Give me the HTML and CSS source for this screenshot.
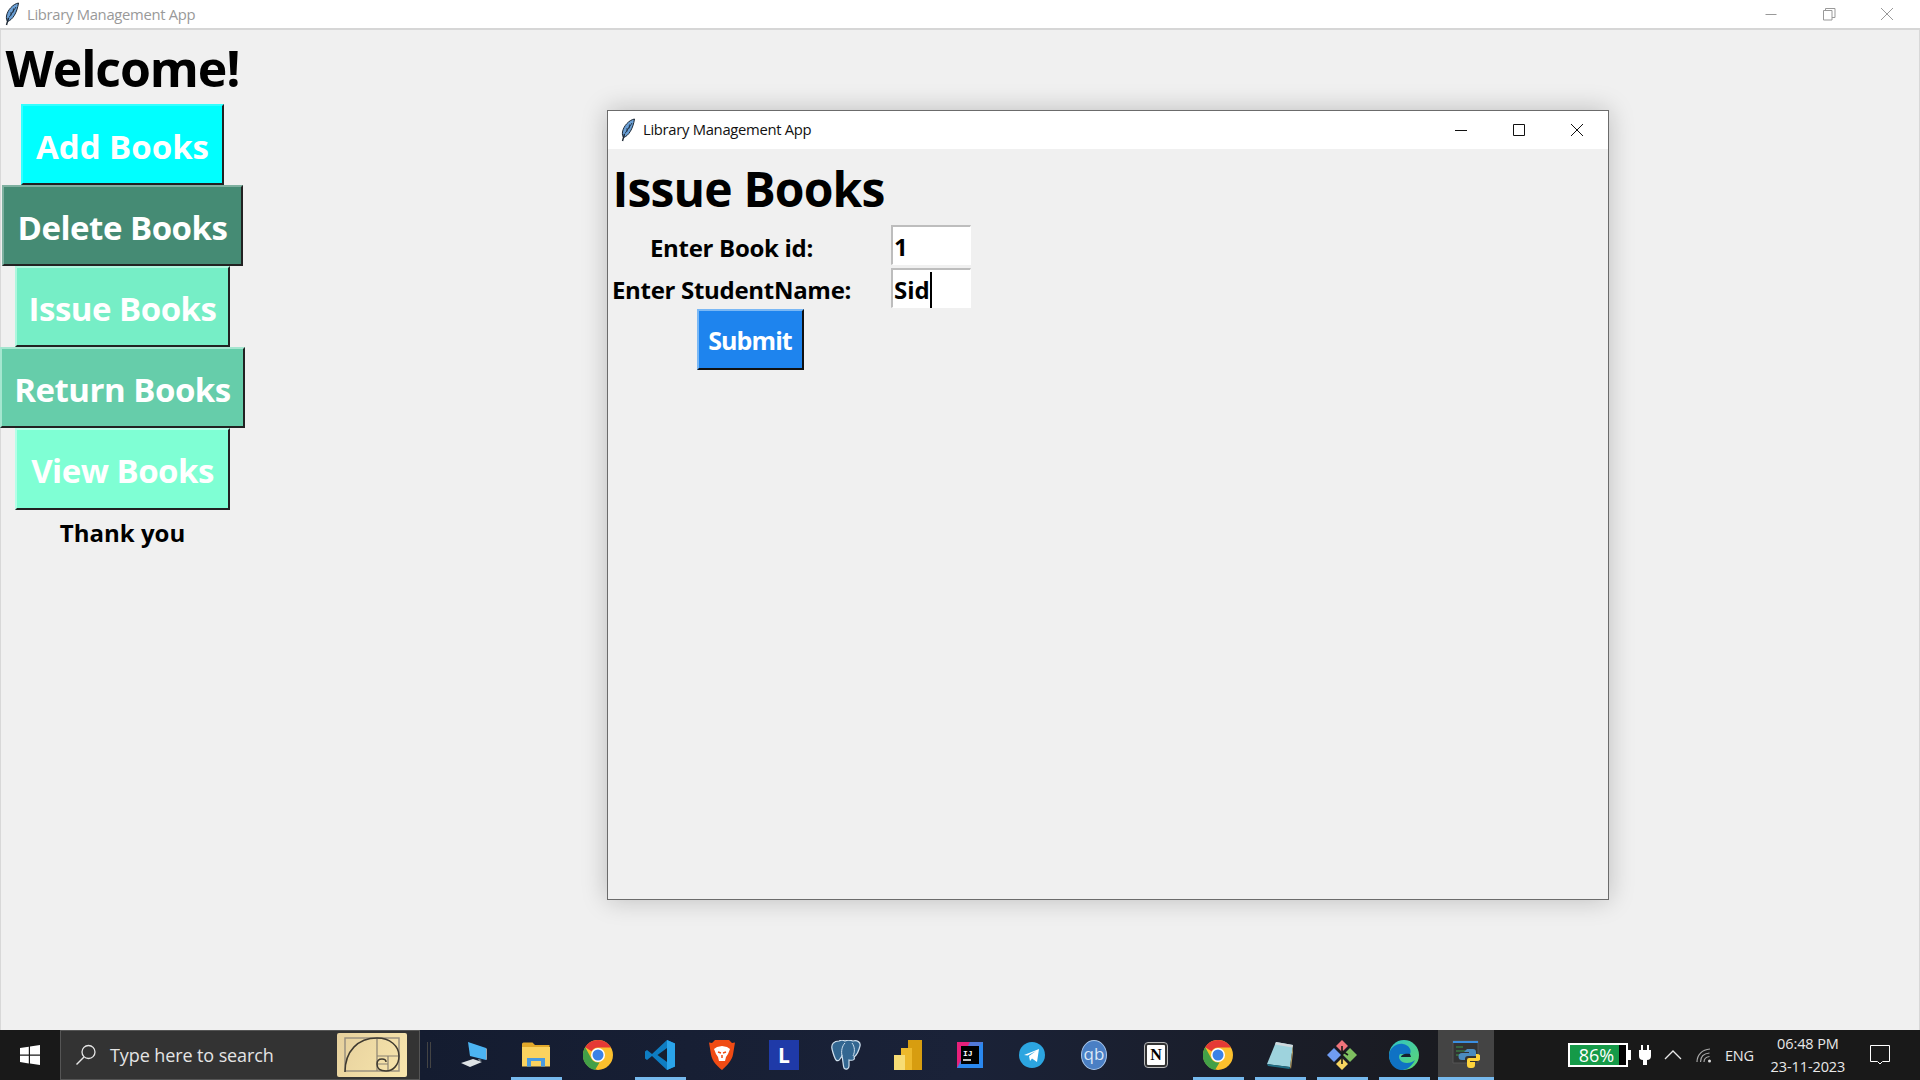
FILE: index.html
```html
<!DOCTYPE html>
<html lang="en">
<head>
<meta charset="utf-8">
<title>Library Management App</title>
<link rel="stylesheet" href="styles.css">
</head>
<body>
<svg class="defs" width="0" height="0">
  <symbol id="feather" viewBox="0 0 16 24">
    <path d="M14.5 1C9 2 3.5 8 2.5 14c-.4 2.500.2 4.500 1 5.500C8.500 18 13 11 14.500 1z" fill="#6a9fd5" stroke="#1c2733" stroke-width="1"/>
    <path d="M12 5 5 15.500M9.500 6.500l-.5 4M7 10v3.500" stroke="#14202c" stroke-width=".8" fill="none"/>
    <path d="M4.500 16 2.500 23" stroke="#1c2733" stroke-width="1.400"/>
  </symbol>
  <symbol id="chrome" viewBox="0 0 30 30">
    <circle cx="15" cy="15" r="15" fill="#fbc02d"/>
    <path d="M15 0a15 15 0 0 1 13 7.500H15A7.500 7.500 0 0 0 8.500 11.300L2.200 7.200A15 15 0 0 1 15 0z" fill="#e53935"/>
    <path d="M2.200 7.200 8.500 18.800A7.500 7.500 0 0 0 16.500 22.400L12 30A15 15 0 0 1 2.200 7.200z" fill="#43a047"/>
    <circle cx="15" cy="15" r="7" fill="#fff"/>
    <circle cx="15" cy="15" r="5.500" fill="#3b82e6"/>
  </symbol>
</svg>

<div class="screen">
  <main class="app">
    <header class="titlebar titlebar-inactive">
      <svg class="feather" width="16" height="24"><use href="#feather"/></svg>
      <span class="title-text">Library Management App</span>
      <div class="win-controls win-controls-inactive">
        <svg width="14" height="14" viewBox="0 0 14 14"><path d="M1.500 7.500h11" stroke="#999" fill="none"/></svg>
        <svg width="14" height="14" viewBox="0 0 14 14"><path d="M1.500 3.500h8.500v9.500H1.500zM3.500 3.500V1.500h9.500v9h-3" stroke="#999" fill="none"/></svg>
        <svg width="14" height="14" viewBox="0 0 14 14"><path d="M1 1l12 12M13 1 1 13" stroke="#999" fill="none"/></svg>
      </div>
    </header>
    <section class="menu">
      <h1 class="welcome">Welcome!</h1>
      <button class="btn btn-add">Add Books</button>
      <button class="btn btn-delete">Delete Books</button>
      <button class="btn btn-issue">Issue Books</button>
      <button class="btn btn-return">Return Books</button>
      <button class="btn btn-view">View Books</button>
      <p class="thanks">Thank you</p>
    </section>
  </main>

  <section class="dialog">
    <header class="titlebar titlebar-dialog">
      <svg class="feather" width="16" height="24"><use href="#feather"/></svg>
      <span class="title-text title-active">Library Management App</span>
      <div class="win-controls">
        <svg width="14" height="14" viewBox="0 0 14 14"><path d="M1 7.500h12" stroke="#111" fill="none"/></svg>
        <svg width="14" height="14" viewBox="0 0 14 14"><path d="M1.500 1.500h11v11h-11z" stroke="#111" fill="none"/></svg>
        <svg width="14" height="14" viewBox="0 0 14 14"><path d="M1 1l12 12M13 1 1 13" stroke="#111" fill="none"/></svg>
      </div>
    </header>
    <form class="issue-form">
      <h2 class="issue-title">Issue Books</h2>
      <label class="field-label">Enter Book id:</label>
      <div class="entry">1</div>
      <label class="field-label">Enter StudentName:</label>
      <div class="entry entry-focus"><span class="caret-text">Sid</span></div>
      <button type="button" class="submit">Submit</button>
    </form>
  </section>

  <footer class="taskbar">
    <div class="start">
      <svg width="20" height="20" viewBox="0 0 20 20"><path d="M0 3l8.800-1.300v7.800H0zM10 1.500 20 0v9.500H10zM0 10.700h8.800v7.700L0 17.100zM10 10.700h10V20l-10-1.500z" fill="#fff"/></svg>
    </div>
    <div class="search">
      <svg width="22" height="22" viewBox="0 0 22 22"><circle cx="13.500" cy="8" r="6.500" stroke="#e6e6e6" stroke-width="1.300" fill="none"/><path d="M9 13 1.500 20.500" stroke="#e6e6e6" stroke-width="1.500"/></svg>
      <span class="search-text">Type here to search</span>
      <div class="doodle">
        <svg width="56" height="36" viewBox="0 0 56 36"><path d="M1 1h54v33H1z" stroke="#9a9180" stroke-width="1.500" fill="none"/><path d="M33 1v33M33 19h22M44 19v15M33 27h11" stroke="#8a8272" stroke-width="1.200" fill="none"/><path d="M1 35C1 14 14 1 33 1c13 0 22 8 22 18 0 9-6 15-13 15-6 0-9-3-9-7 0-3 2-5 5-5 2 0 4 1 4 3" stroke="#3f3a30" stroke-width="1.500" fill="none"/></svg>
      </div>
    </div>
    <div class="apps">
      <i class="sep"></i>
      <div class="slot slot-first">
        <svg width="30" height="30" viewBox="0 0 30 30"><path d="M9 2l18 6v12L11 16z" fill="#4cb4f2"/><path d="M27 8v12l1-.5V9z" fill="#9aa5ad"/><path d="M2 23l12-4 9 3-12 5z" fill="#dfe3e6"/><path d="M19 19l4 1-3 1z" fill="#8d979e"/></svg>
      </div>
      <div class="slot slot-on">
        <svg width="30" height="26" viewBox="0 0 30 26"><path d="M1 2a1.500 1.500 0 0 1 1.500-1.500h9L14 3h14.500v4H1z" fill="#e2a92b"/><path d="M1 5h28v19.500H1z" fill="#fbd35f"/><path d="M6 24.500V16h18v8.500h-4V19h-10v5.500z" fill="#4a9be0"/></svg>
      </div>
      <div class="slot">
        <svg width="30" height="30"><use href="#chrome"/></svg>
      </div>
      <div class="slot slot-on">
        <svg width="30" height="30" viewBox="0 0 30 30"><path d="M22 0l8 3.500v23L22 30 7 16 2 20l-2-1.500V11.500L2 10l5 4z" fill="#0e7dc2"/><path d="M22 0l8 3.500v23L22 30z" fill="#2aa4ea"/><path d="M22 8 12.500 15 22 22z" fill="#16202f"/></svg>
      </div>
      <div class="slot">
        <svg width="26" height="30" viewBox="0 0 26 30"><path d="M6 0h14l3 3 3-.5-2 12c-1 6-6 11-11 15.500C8 26 3 21 2 14.500L0 2.500 3 3z" fill="#f04b14"/><path d="M8 7l5-1 5 1 3 2-2 5-2 3-1 4h-6l-1-4-2-3-2-5z" fill="#fff"/><path d="M9 12l3 1M17 12l-3 1M13 15v3" stroke="#f04b14" stroke-width="1.500"/></svg>
      </div>
      <div class="slot">
        <div class="l-icon">L</div>
      </div>
      <div class="slot">
        <svg width="30" height="30" viewBox="0 0 30 30"><path d="M8 1C3 1 0 4 1 9c1 4 2 8 4 11 1 1 3 1 4-1l2-3c1 4 1 9 2 12 2 2 5 1 5-2v-6c5 1 6-1 5-3 3-2 5-7 6-11 1-4-3-6-7-5-3-1-6-1-8 0-2-1-4-1-6 0z" fill="#336791" stroke="#cfe0ee" stroke-width="1.200"/><path d="M14 3c-3 3-4 8-3 13M21 3c3 4 3 9 1 13" stroke="#cfe0ee" stroke-width="1" fill="none"/></svg>
      </div>
      <div class="slot">
        <svg width="28" height="30" viewBox="0 0 28 30"><path d="M14 0h14v30H14z" fill="#d79d10"/><path d="M7 8h11v22H7z" fill="#edb92c"/><path d="M0 15h11v15H0z" fill="#f7dc74"/></svg>
      </div>
      <div class="slot">
        <svg width="26" height="26" viewBox="0 0 26 26"><path d="M0 0h26v26H0z" fill="#2a6df0"/><path d="M0 0h26L0 26z" fill="#e8207a"/><path d="M13 0h13v26H0z" fill="#2b8ff0" opacity=".8"/><path d="M4 4h18v18H4z" fill="#000"/><text class="ij-text" x="6" y="14">IJ</text><path d="M6 18h8" stroke="#fff" stroke-width="1.500"/></svg>
      </div>
      <div class="slot">
        <svg width="26" height="26" viewBox="0 0 26 26"><circle cx="13" cy="13" r="13" fill="#2ca5e0"/><path d="M5 13 20 7l-2 13-5-3.500-2 2.500-1-5 7-5-8.500 4.500z" fill="#fff"/></svg>
      </div>
      <div class="slot">
        <div class="qb-icon">qb</div>
      </div>
      <div class="slot">
        <div class="notion-icon">N</div>
      </div>
      <div class="slot slot-on">
        <svg width="30" height="30"><use href="#chrome"/></svg>
      </div>
      <div class="slot slot-on">
        <svg width="26" height="28" viewBox="0 0 26 28"><path d="M9 1l17 3-3 22-23-3z" fill="#9ed3dd"/><path d="M9 1l17 3-.5 2.500L8 3.500z" fill="#cfd8dc"/><path d="M0 23l23 3-.5 2L1 25z" fill="#1f6f86"/><path d="M23 26l3-22 .5 3-2.500 21z" fill="#b09a60"/></svg>
      </div>
      <div class="slot slot-on">
        <svg width="30" height="30" viewBox="0 0 30 30"><path d="M15 0l6 6-6 6-6-6z" fill="#f0737a"/><path d="M15 18l6 6-6 6-6-6z" fill="#f7d560"/><path d="M0 15l7-7 7 7-7 7z" fill="#6f9cf2"/><path d="M16 15l7-7 7 7-7 7z" fill="#7ec060"/><path d="M15 6v18M15 11l6 4" stroke="#1a1a1a" stroke-width="1.600" fill="none"/></svg>
      </div>
      <div class="slot slot-on">
        <svg width="30" height="30" viewBox="0 0 30 30"><defs><linearGradient id="edge" x1="0" y1="0" x2="1" y2="1"><stop offset="0" stop-color="#2fc3c8"/><stop offset="1" stop-color="#5fd86e"/></linearGradient></defs><circle cx="15" cy="15" r="15" fill="url(#edge)"/><path d="M0 15C1 7 8 3 14 4c6 1 9 6 7 10H11c-3 4 1 9 7 9 3 0 6-1 8-3-3 6-8 10-13 10C5 30 0 23 0 15z" fill="#0f72c4"/><path d="M22 17H12c0-2 4-4 9-3z" fill="#16202f"/></svg>
      </div>
      <div class="slot slot-active">
        <svg width="28" height="30" viewBox="0 0 28 30"><path d="M1 1h25v22H1z" fill="#333" stroke="#555"/><path d="M1 1h25v2H1z" fill="#3b8ee0"/><path d="M4 7h7M4 11h10M4 15h6" stroke="#3c9a4a" stroke-width="1"/><path d="M15 9h6a3 3 0 0 1 3 3v4h-8a3 3 0 0 0-3 3v1h-3a3 3 0 0 1 0-7h7v-1h-5z" fill="#4b8bbe"/><path d="M24 14h1a3 3 0 0 1 0 7h-7v1h5v3a3 3 0 0 1-3 3h-2a3 3 0 0 1-3-3v-5a2 2 0 0 1 2-2h7z" fill="#ffd43b"/></svg>
      </div>
    </div>
    <div class="tray">
      <div class="battery">
        <div class="battery-body"><span class="battery-text">86%</span></div>
        <i class="battery-nub"></i>
      </div>
      <svg class="tray-plug" width="12" height="20" viewBox="0 0 12 20"><path d="M2 0h2v5h4V0h2v5h2v6a4 4 0 0 1-4 4v5H4v-5a4 4 0 0 1-4-4V5h2z" fill="#fff"/></svg>
      <svg class="tray-caret" width="18" height="10" viewBox="0 0 18 10"><path d="M1 9l8-8 8 8" stroke="#e8e8e8" stroke-width="1.300" fill="none"/></svg>
      <svg class="tray-wifi" width="16" height="16" viewBox="0 0 16 16"><circle cx="13.500" cy="14" r="1.500" fill="#ddd"/><path d="M1 15C1 8 6 2.500 14 2M4.500 15c0-5 3-8.500 9-9M8 15c0-3 2-5 5.500-5.500" stroke="#aaa" stroke-width="1.200" fill="none"/></svg>
      <span class="tray-lang">ENG</span>
      <div class="clock"><span>06:48 PM</span><span>23-11-2023</span></div>
      <svg class="tray-note" width="20" height="20" viewBox="0 0 20 20"><path d="M.5.500h19v16h-7l-2.500 2.500-2.500-2.500h-7z" stroke="#fff" fill="none"/></svg>
    </div>
  </footer>
</div>
</body>
</html>
```
FILE: styles.css
```css
* { box-sizing: border-box; }
html, body { margin: 0; height: 100%; }
body { font-family: "Open Sans", "Noto Sans", sans-serif; background: #f0f0f0; overflow: hidden; }
.defs { display: block; height: 0; }
.screen { height: 1080px; display: flex; flex-direction: column; position: relative; }

.app { flex: 1; display: flex; flex-direction: column; border-left: 1px solid #d8d8d8; border-right: 1px solid #d8d8d8; }
.titlebar { display: flex; align-items: center; background: #fff; }
.titlebar-inactive { height: 30px; padding-left: 4px; border-bottom: 2px solid #d6d6d6; margin-left: -1px; margin-right: -1px; }
.titlebar-dialog { height: 38px; padding-left: 12px; }
.feather { flex: none; }
.title-text { margin-left: 7px; font-size: 14.800px; color: #999; letter-spacing: -.3px; }
.title-active { color: #111; margin-left: 7px; padding-bottom: 2px; }
.win-controls { margin-left: auto; display: flex; gap: 44px; padding-right: 24px; }
.win-controls-inactive { padding-right: 26px; gap: 44px; }

.menu { width: 245px; margin-left: -1px; display: flex; flex-direction: column; align-items: center; }
.welcome { margin: 8px 0 0; height: 66px; line-height: 60px; font-size: 50px; font-weight: 700; color: #000; letter-spacing: -1.100px; }
.btn { font: 700 33px/1 "Open Sans", sans-serif; color: #fff; height: 81px; padding: 3px 0 0; border: 2px solid; letter-spacing: -.5px; display: block; }
.btn-add { width: 203px; background: #00ffff; border-color: #3ff #222 #222 #3ff; letter-spacing: 0; }
.btn-delete { width: 241px; background: #458b74; border-color: #7fb0a0 #222 #222 #7fb0a0; }
.btn-issue { width: 215px; background: #76eec6; border-color: #aef7de #222 #222 #aef7de; }
.btn-return { width: 245px; background: #66cdaa; border-color: #a5e6d0 #222 #222 #a5e6d0; }
.btn-view { width: 215px; height: 82px; background: #7fffd4; border-color: #b5ffe8 #222 #222 #b5ffe8; }
.thanks { margin: 5px 0 0; font-size: 24px; line-height: 36px; font-weight: 700; color: #000; }

.dialog { position: absolute; left: 607px; top: 110px; width: 1002px; height: 790px; background: #f0f0f0; border: 1px solid #6b6b6b; box-shadow: 0 0 24px rgba(0,0,0,.22); display: flex; flex-direction: column; }
.issue-form { display: grid; grid-template-columns: 245px 34px 83px; grid-template-rows: 71px 43px 41px auto; justify-items: center; align-content: start; padding: 5px 0 0 1px; }
.issue-title { grid-column: 1 / 3; margin: 0; line-height: 70px; font-size: 48px; font-weight: 700; color: #000; letter-spacing: -.85px; }
.field-label { grid-column: 1; align-self: center; padding-top: 2px; line-height: 38px; font-size: 24px; font-weight: 700; color: #000; letter-spacing: -.3px; white-space: nowrap; }
.entry { grid-column: 3; justify-self: end; align-self: start; width: 80px; height: 40px; background: #fff; border: 1px solid #fff; border-top: 2px solid #bdbdbd; border-left: 2px solid #bdbdbd; font-size: 24px; font-weight: 700; line-height: 40px; padding-left: 1px; color: #000; }
.caret-text { border-right: 2px solid #000; display: inline-block; line-height: 36px; }
.submit { grid-column: 1 / 3; width: 107px; height: 61px; margin-left: 3px; padding: 1px 0 0; font: 700 25px/1 "Open Sans", sans-serif; color: #fff; background: #1e84ee; border: 2px solid; border-color: #7ab8f5 #111 #111 #7ab8f5; letter-spacing: -.9px; }

.taskbar { height: 50px; flex: none; display: flex; background: #191919; color: #fff; }
.start { width: 60px; display: flex; align-items: center; justify-content: center; }
.search { width: 360px; display: flex; align-items: center; background: #333; border: 1px solid #555; padding-left: 14px; }
.search-text { margin-left: 13px; padding-bottom: 1px; font-size: 18px; color: #e4e4e4; letter-spacing: -.1px; }
.doodle { margin-left: auto; margin-right: 12px; width: 70px; height: 44px; display: flex; align-items: center; justify-content: center; border-radius: 2px; background: linear-gradient(120deg, #e6d09d, #f8e6ad); }
.apps { flex: none; width: 1072px; display: flex; align-items: stretch; background: linear-gradient(90deg, #141c30, #1a2238 50%, #1a1a1e); }
.sep { width: 4px; margin: 12px 0 12px 7px; border-left: 1px solid #444; border-right: 1px solid #444; flex: none; }
.slot { width: 62px; flex: none; display: flex; align-items: center; justify-content: center; border-bottom: 3px solid transparent; padding-top: 3px; background-clip: padding-box; position: relative; }
.slot-first { margin-left: 12px; }
.slot-on::after { content: ""; position: absolute; left: 6px; right: 5px; bottom: -3px; height: 3px; background: #76b9ed; }
.slot-active { background: #444; width: 56px; margin-left: 3px; }
.slot-active::after { content: ""; position: absolute; left: 0; right: 0; bottom: -3px; height: 3px; background: #76b9ed; }
.l-icon { width: 30px; height: 30px; background: #1f3aa8; color: #fff; font: 700 21px/30px "Open Sans", sans-serif; text-align: center; }
.ij-text { font: 700 8px "Liberation Mono", monospace; fill: #fff; }
.qb-icon { width: 26px; height: 30px; border-radius: 50%; background: #4a7fc4; border: 1px solid #a9c6ea; color: #dbe8f7; font-size: 17px; line-height: 26px; text-align: center; }
.notion-icon { width: 22px; height: 24px; background: #fff; border: 2px solid #333; outline: 1px solid #bbb; border-radius: 3px; color: #000; font: 700 16px/20px "Liberation Serif", serif; text-align: center; }

.tray { flex: 1; display: flex; align-items: center; padding-left: 76px; }
.battery { display: flex; align-items: center; width: 64px; }
.battery-body { width: 60px; height: 24px; border: 2px solid #fff; background: linear-gradient(90deg, #159a48 87%, #000 87%); display: flex; justify-content: center; align-items: center; }
.battery-text { font-size: 18px; color: #fff; margin-right: 3px; }
.battery-nub { width: 3px; height: 10px; background: #fff; }
.tray-plug { margin-left: 7px; }
.tray-caret { margin-left: 13px; }
.tray-wifi { margin-left: 14px; }
.tray-lang { margin-left: 13px; font-size: 14.500px; color: #e8e8e8; letter-spacing: -.2px; }
.clock { width: 92px; margin-left: 8px; display: flex; flex-direction: column; align-items: center; font-size: 14.500px; line-height: 23px; color: #e8e8e8; letter-spacing: -.1px; }
.tray-note { margin-left: 16px; }
```
